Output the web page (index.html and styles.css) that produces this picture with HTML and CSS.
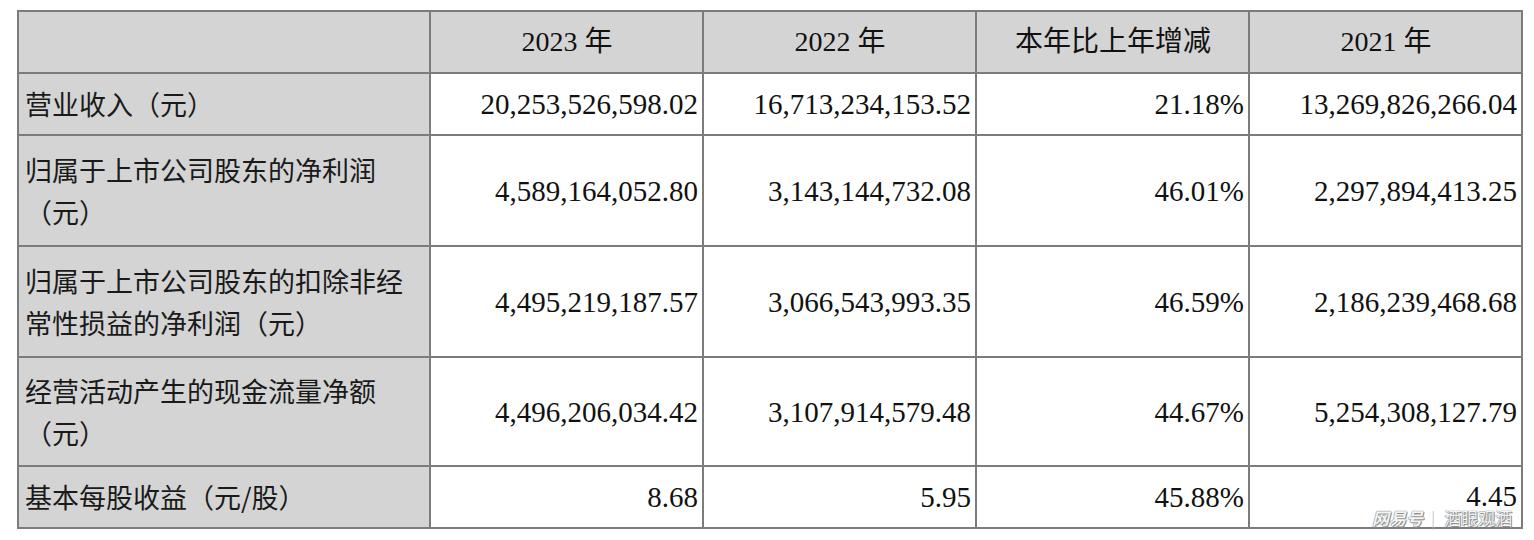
FILE: index.html
```html
<!DOCTYPE html>
<html lang="zh-CN">
<head>
<meta charset="utf-8">
<title>主要会计数据</title>
<link rel="stylesheet" href="styles.css">
</head>
<body>
<div class="page">
  <table class="fin">
    <colgroup>
      <col class="c-label">
      <col class="c-val">
      <col class="c-val">
      <col class="c-val">
      <col class="c-val">
    </colgroup>
    <thead>
      <tr class="r-single">
        <th class="label"></th>
        <th>2023 年</th>
        <th>2022 年</th>
        <th>本年比上年增减</th>
        <th>2021 年</th>
      </tr>
    </thead>
    <tbody>
      <tr class="r-single">
        <td class="label">营业收入（元）</td>
        <td class="num">20,253,526,598.02</td>
        <td class="num">16,713,234,153.52</td>
        <td class="num">21.18%</td>
        <td class="num">13,269,826,266.04</td>
      </tr>
      <tr class="r-double">
        <td class="label">归属于上市公司股东的净利润<br>（元）</td>
        <td class="num">4,589,164,052.80</td>
        <td class="num">3,143,144,732.08</td>
        <td class="num">46.01%</td>
        <td class="num">2,297,894,413.25</td>
      </tr>
      <tr class="r-double">
        <td class="label">归属于上市公司股东的扣除非经<br>常性损益的净利润（元）</td>
        <td class="num">4,495,219,187.57</td>
        <td class="num">3,066,543,993.35</td>
        <td class="num">46.59%</td>
        <td class="num">2,186,239,468.68</td>
      </tr>
      <tr class="r-double r-short">
        <td class="label">经营活动产生的现金流量净额<br>（元）</td>
        <td class="num">4,496,206,034.42</td>
        <td class="num">3,107,914,579.48</td>
        <td class="num">44.67%</td>
        <td class="num">5,254,308,127.79</td>
      </tr>
      <tr class="r-single">
        <td class="label">基本每股收益（元/股）</td>
        <td class="num">8.68</td>
        <td class="num">5.95</td>
        <td class="num">45.88%</td>
        <td class="num num-last">4.45</td>
      </tr>
    </tbody>
  </table>
  <div class="watermark"><span class="wm-brand">网易号</span><span class="wm-sep">|</span><span class="wm-name">酒眼观酒</span></div>
</div>
</body>
</html>
```

FILE: styles.css
```css
html, body {
  margin: 0;
  padding: 0;
  background: #ffffff;
}

.page {
  position: relative;
  padding: 10px 0 0 17px;
  width: 1517px;
  height: 530px;
}

.fin {
  border-collapse: collapse;
  table-layout: fixed;
  width: 1504px;
  font-family: "Liberation Serif", "Noto Sans CJK SC", serif;
  color: #111111;
}

.c-label { width: 412px; }
.c-val { width: 273px; }

.fin th,
.fin td {
  border: 2px solid #7c7c7c;
  padding: 0 5px 0 6px;
  vertical-align: middle;
  font-size: 28px;
  line-height: 42px;
  white-space: nowrap;
  overflow: hidden;
}

.fin th {
  background: #d4d4d4;
  font-weight: normal;
  text-align: center;
}

.fin td.label {
  background: #d4d4d4;
  text-align: left;
  font-family: "Noto Sans CJK SC", "Liberation Sans", sans-serif;
  font-size: 27px;
  color: #1a1a1a;
}

.fin td.num {
  text-align: right;
  font-size: 29px;
  padding-right: 4px;
}

.fin td.num-last {
  vertical-align: top;
  padding-top: 9px;
  line-height: 40px;
}

.r-single { height: 62px; }
.r-double { height: 111px; }
.r-short { height: 109px; }

.watermark {
  position: absolute;
  left: 1372px;
  top: 509px;
  font-family: "Noto Sans CJK SC", sans-serif;
  font-size: 17px;
  line-height: 17px;
  color: #f4f4f4;
  text-shadow: 0 0 1px #777, 0 0 1px #777, 1px 1px 0 #999;
  white-space: nowrap;
}

.wm-brand {
  font-style: italic;
  font-weight: bold;
}

.wm-sep {
  margin: 0 9px 0 8px;
  color: #bbbbbb;
  text-shadow: none;
  font-weight: 300;
}
```
